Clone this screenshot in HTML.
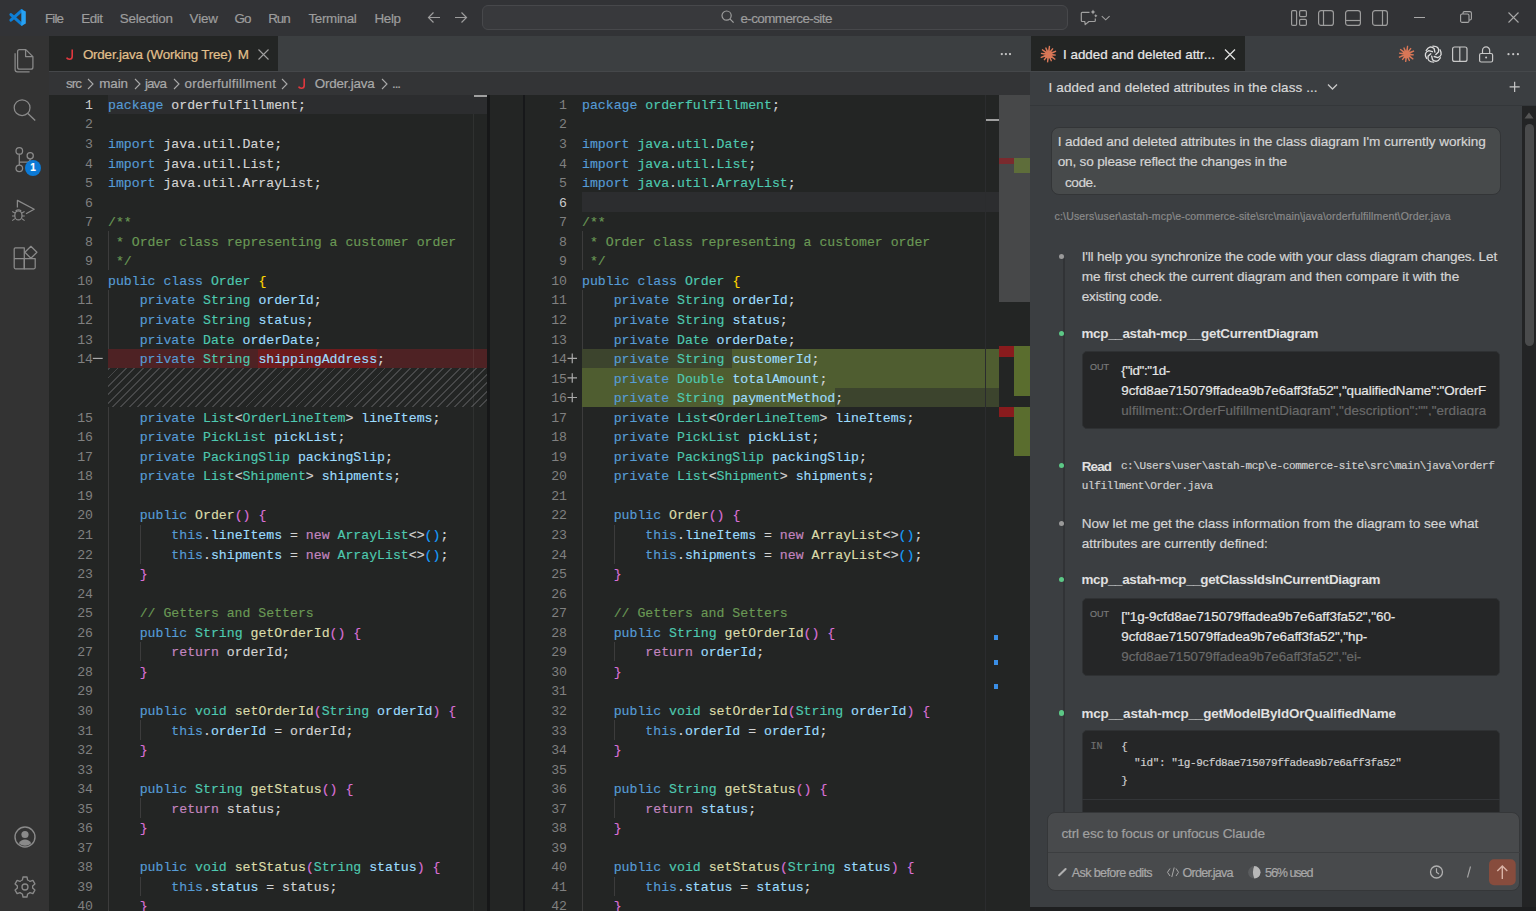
<!DOCTYPE html>
<html><head><meta charset="utf-8">
<style>
*{box-sizing:border-box}
html,body{margin:0;padding:0;width:1536px;height:911px;overflow:hidden;background:#323336;font-family:"Liberation Sans",sans-serif}
.a{position:absolute}
.tx{position:absolute;white-space:pre;-webkit-text-stroke:0.2px currentColor}
.cl{position:absolute;left:0;height:19.55px;line-height:19.55px;font-family:"Liberation Mono",monospace;font-size:13.200px;white-space:pre;color:#d4d4d4;-webkit-text-stroke:0.15px currentColor}
.ln{position:absolute;width:40px;height:19.55px;line-height:19.55px;font-family:"Liberation Mono",monospace;font-size:13.200px;text-align:right;white-space:pre}
svg{position:absolute;overflow:visible}
</style></head><body>
<!-- title bar -->
<div class="a" style="left:0;top:0;width:1536px;height:36px;background:#323336"></div>
<svg style="left:9.3px;top:9.1px" width="17" height="17" viewBox="0 0 17 17">
 <path d="M12.6 1.6L1.9 11.2M1.9 5.6L12.6 15.2" stroke="#0e7fd6" stroke-width="3" stroke-linecap="round"/>
 <path d="M12.3 0.2L16.8 2.4V14.6L12.3 16.9Z" fill="#27a2f4"/>
</svg>
<svg style="left:427px;top:11px" width="14" height="13" viewBox="0 0 14 13"><path d="M13 6.5H1.5M6.5 1.5L1.5 6.5L6.5 11.5" fill="none" stroke="#9d9d9d" stroke-width="1.2"/></svg>
<svg style="left:454px;top:11px" width="14" height="13" viewBox="0 0 14 13"><path d="M1 6.5H12.5M7.5 1.5L12.5 6.5L7.5 11.5" fill="none" stroke="#9d9d9d" stroke-width="1.2"/></svg>
<div class="a" style="left:482px;top:5px;width:586px;height:25px;background:#38393c;border:1px solid #47484b;border-radius:6px"></div>
<svg style="left:721px;top:10px" width="14" height="14" viewBox="0 0 14 14"><circle cx="5.6" cy="5.6" r="4.6" fill="none" stroke="#9d9d9d" stroke-width="1.2"/><path d="M8.9 8.9L12.6 12.6" stroke="#9d9d9d" stroke-width="1.3"/></svg>
<svg style="left:0;top:0" width="1536" height="36" viewBox="0 0 1536 36"><path d="M1089.5 12.3H1082.2Q1081.3 12.3 1081.3 13.2V20.6Q1081.3 21.5 1082.2 21.5H1084.8L1085.2 24.6L1088.9 21.5H1094.4Q1095.3 21.5 1095.3 20.6V18.4" fill="none" stroke="#a0a0a0" stroke-width="1.2" stroke-linejoin="round"/><path d="M1093 9.6L1093.8 11.2L1095.4 12L1093.8 12.8L1093 14.4L1092.2 12.8L1090.6 12L1092.2 11.2Z M1095.8 14.1L1096.4 15.2L1097.5 15.8L1096.4 16.4L1095.8 17.5L1095.2 16.4L1094.1 15.8L1095.2 15.2Z" fill="#a8a8a8"/><path d="M1101.8 16.2L1105.7 19.8L1109.6 16.2" fill="none" stroke="#a0a0a0" stroke-width="1.1"/></svg>
<!-- layout icons -->
<svg style="left:1291px;top:10px" width="16" height="16" viewBox="0 0 16 16"><rect x="0.6" y="0.6" width="5" height="14.8" rx="1.2" fill="none" stroke="#9d9d9d" stroke-width="1.2"/><rect x="8.6" y="0.6" width="6.8" height="6" rx="1.2" fill="none" stroke="#9d9d9d" stroke-width="1.2"/><rect x="8.6" y="9.4" width="6.8" height="6" rx="1.2" fill="none" stroke="#9d9d9d" stroke-width="1.2"/></svg>
<svg style="left:1318px;top:10px" width="16" height="16" viewBox="0 0 16 16"><rect x="0.6" y="0.6" width="14.8" height="14.8" rx="2.5" fill="none" stroke="#9d9d9d" stroke-width="1.2"/><path d="M5.5 0.6V15.4" stroke="#9d9d9d" stroke-width="1.2"/></svg>
<svg style="left:1345px;top:10px" width="16" height="16" viewBox="0 0 16 16"><rect x="0.6" y="0.6" width="14.8" height="14.8" rx="2.5" fill="none" stroke="#9d9d9d" stroke-width="1.2"/><path d="M0.6 10.5H15.4" stroke="#9d9d9d" stroke-width="1.2"/></svg>
<svg style="left:1372px;top:10px" width="16" height="16" viewBox="0 0 16 16"><rect x="0.6" y="0.6" width="14.8" height="14.8" rx="2.5" fill="none" stroke="#9d9d9d" stroke-width="1.2"/><path d="M10.5 0.6V15.4" stroke="#9d9d9d" stroke-width="1.2"/></svg>
<div class="a" style="left:1414px;top:16.5px;width:11px;height:1.2px;background:#a8a8a8"></div>
<svg style="left:1460px;top:11px" width="12" height="12" viewBox="0 0 12 12"><rect x="0.6" y="3" width="8.4" height="8.4" rx="1.5" fill="none" stroke="#a8a8a8" stroke-width="1.1"/><path d="M3 3V2.1A1.5 1.5 0 0 1 4.5 0.6H9.9A1.5 1.5 0 0 1 11.4 2.1V7.5A1.5 1.5 0 0 1 9.9 9H9" fill="none" stroke="#a8a8a8" stroke-width="1.1"/></svg>
<svg style="left:1508px;top:12px" width="11" height="11" viewBox="0 0 11 11"><path d="M0.5 0.5L10.5 10.5M10.5 0.5L0.5 10.5" stroke="#a8a8a8" stroke-width="1.1"/></svg>

<!-- activity bar -->
<div class="a" style="left:0;top:36px;width:49px;height:875px;background:#333333"></div>
<svg style="left:0;top:0" width="60" height="300" viewBox="0 0 60 300">
<g fill="none" stroke="#8b8b8b" stroke-width="1.25" stroke-linejoin="round">
 <path d="M19.5 49.6H25.8L32.9 56.6V67.2Q32.9 69.2 30.9 69.2H19.5Q17.6 69.2 17.6 67.2V51.6Q17.6 49.6 19.5 49.6Z"/>
 <path d="M25.6 49.8V56.5H32.8"/>
 <path d="M15.1 53.3V69.5Q15.1 71.8 17.4 71.8H29.6"/>
 <circle cx="22.1" cy="107.7" r="7.9"/>
 <path d="M27.9 113.6L35.2 120.6" stroke-width="1.4"/>
 <circle cx="19.3" cy="150.9" r="3.3"/>
 <circle cx="30.2" cy="155.8" r="3.1"/>
 <circle cx="19.3" cy="168.3" r="3.3"/>
 <path d="M19.3 154.2V165M19.3 162.2H26Q30.2 162.2 30.2 158.9"/>
 <path d="M17.4 207.5V200.4L34.2 209.3L26 213.8"/>
 <ellipse cx="18.4" cy="215.4" rx="3.6" ry="4.6"/>
 <path d="M12.2 211.6L15 213M12 216H14.8M12.2 220.6L15 218.6M24.6 211.6L21.8 213M24.8 216H22M24.6 220.6L21.8 218.6M15.6 211Q18.4 208.5 21.2 211" stroke-width="1.1"/>
 <path d="M15.4 247.9H24.3V268.8H15.4Q14.2 268.8 14.2 267.6V249.1Q14.2 247.9 15.4 247.9Z"/>
 <path d="M14.2 258.5H35.2V267.6Q35.2 268.8 34 268.8H24.3V258.5"/>
 <path d="M30.9 246.3L36.9 252.3L30.9 258.3L24.9 252.3Z"/>
</g>
</svg>
<div class="a" style="left:24.8px;top:159.8px;width:16.4px;height:16.4px;border-radius:8.2px;background:#0c7ad6"></div>
<div class="tx" style="left:24.8px;top:159.8px;width:16.4px;line-height:16.4px;font-size:10px;font-weight:700;color:#fff;text-align:center">1</div>
<svg style="left:14px;top:826px" width="22" height="22" viewBox="0 0 22 22"><circle cx="11" cy="11" r="10" fill="none" stroke="#8a8a8a" stroke-width="1.4"/><circle cx="11" cy="8.5" r="3.6" fill="#8a8a8a"/><path d="M4.8 17.2Q7 13.5 11 13.5Q15 13.5 17.2 17.2Q14.5 19.8 11 19.8Q7.5 19.8 4.8 17.2Z" fill="#8a8a8a"/></svg>
<svg style="left:14px;top:876px" width="22" height="22" viewBox="0 0 22 22"><path d="M9 1H13L13.6 4A7.5 7.5 0 0 1 16 5.4L18.9 4.4L20.9 7.9L18.6 9.9A7.5 7.5 0 0 1 18.6 12.1L20.9 14.1L18.9 17.6L16 16.6A7.5 7.5 0 0 1 13.6 18L13 21H9L8.4 18A7.5 7.5 0 0 1 6 16.6L3.1 17.6L1.1 14.1L3.4 12.1A7.5 7.5 0 0 1 3.4 9.9L1.1 7.9L3.1 4.4L6 5.4A7.5 7.5 0 0 1 8.4 4Z" fill="none" stroke="#8a8a8a" stroke-width="1.3" stroke-linejoin="round"/><circle cx="11" cy="11" r="3" fill="none" stroke="#8a8a8a" stroke-width="1.3"/></svg>

<!-- editor tab bar -->
<div class="a" style="left:49px;top:36px;width:981px;height:35px;background:#3c3f41"></div>
<div class="a" style="left:49px;top:36px;width:229.3px;height:35px;background:#232524"></div>
<div class="a" style="left:49px;top:71px;width:981px;height:1px;background:#45474a"></div>
<svg style="left:66px;top:49px" width="9" height="11" viewBox="0 0 9 11"><path d="M6.2 0.5V7.5Q6.2 10.2 3.4 10.2Q1.3 10.2 0.6 8.6" fill="none" stroke="#e0383e" stroke-width="1.6"/></svg>
<svg style="left:258px;top:49px" width="11" height="11" viewBox="0 0 11 11"><path d="M0.5 0.5L10.5 10.5M10.5 0.5L0.5 10.5" stroke="#a0a0a0" stroke-width="1.1"/></svg>
<svg style="left:0;top:0" width="1536" height="80"><circle cx="1001.8" cy="54.1" r="1.15" fill="#c8c8c8"/><circle cx="1005.9" cy="54.1" r="1.15" fill="#c8c8c8"/><circle cx="1010" cy="54.1" r="1.15" fill="#c8c8c8"/></svg>
<!-- breadcrumbs -->
<div class="a" style="left:49px;top:72px;width:981px;height:22.5px;background:#333436"></div>
<svg style="left:87px;top:78px" width="7" height="12" viewBox="0 0 7 12"><path d="M1 1L6 6L1 11" fill="none" stroke="#a9a9a9" stroke-width="1.1"/></svg>
<svg style="left:134px;top:78px" width="7" height="12" viewBox="0 0 7 12"><path d="M1 1L6 6L1 11" fill="none" stroke="#a9a9a9" stroke-width="1.1"/></svg>
<svg style="left:173px;top:78px" width="7" height="12" viewBox="0 0 7 12"><path d="M1 1L6 6L1 11" fill="none" stroke="#a9a9a9" stroke-width="1.1"/></svg>
<svg style="left:281px;top:78px" width="7" height="12" viewBox="0 0 7 12"><path d="M1 1L6 6L1 11" fill="none" stroke="#a9a9a9" stroke-width="1.1"/></svg>
<svg style="left:381px;top:78px" width="7" height="12" viewBox="0 0 7 12"><path d="M1 1L6 6L1 11" fill="none" stroke="#a9a9a9" stroke-width="1.1"/></svg>
<svg style="left:298px;top:78px" width="9" height="11" viewBox="0 0 9 11"><path d="M6.2 0.5V7.5Q6.2 10.2 3.4 10.2Q1.3 10.2 0.6 8.6" fill="none" stroke="#e0383e" stroke-width="1.6"/></svg>

<!-- left editor -->
<div class="a" style="left:49px;top:94.5px;width:439px;height:817px;background:#232524"></div>
<div style="position:absolute;left:108.0px;top:231.35px;width:1px;height:39.10px;background:#3c3c3c"></div>
<div style="position:absolute;left:108.0px;top:290.00px;width:1px;height:645.15px;background:#3c3c3c"></div>
<div style="position:absolute;left:139.7px;top:524.60px;width:1px;height:39.10px;background:#3c3c3c"></div>
<div style="position:absolute;left:139.7px;top:641.90px;width:1px;height:19.55px;background:#3c3c3c"></div>
<div style="position:absolute;left:139.7px;top:720.10px;width:1px;height:19.55px;background:#3c3c3c"></div>
<div style="position:absolute;left:139.7px;top:798.30px;width:1px;height:19.55px;background:#3c3c3c"></div>
<div style="position:absolute;left:139.7px;top:876.50px;width:1px;height:19.55px;background:#3c3c3c"></div>
<div class="a" style="left:108px;top:348.8px;width:379.4px;height:19.56px;background:#4e2224"></div>
<div class="a" style="left:258px;top:348.8px;width:119px;height:19.56px;background:#6e1b1d"></div>
<div class="a" style="left:108px;top:368.4px;width:379.4px;height:39.1px;background:repeating-linear-gradient(-45deg,#232524 0px,#232524 4.6px,#474849 4.6px,#474849 5.9px)"></div>
<div class="a" style="left:473px;top:94.5px;width:1px;height:817px;background:rgba(255,255,255,0.06)"></div>
<div class="a" style="left:108px;top:94.5px;width:379.4px;height:19.56px;background:#2c2d2f"></div>
<div class="a" style="left:474px;top:94.5px;width:13.4px;height:2px;background:#a0a0a0"></div>
<div class="ln" style="top:95.90px;left:53px;color:#cccccc">1</div>
<div class="ln" style="top:115.45px;left:53px;color:#808080">2</div>
<div class="ln" style="top:135.00px;left:53px;color:#808080">3</div>
<div class="ln" style="top:154.55px;left:53px;color:#808080">4</div>
<div class="ln" style="top:174.10px;left:53px;color:#808080">5</div>
<div class="ln" style="top:193.65px;left:53px;color:#808080">6</div>
<div class="ln" style="top:213.20px;left:53px;color:#808080">7</div>
<div class="ln" style="top:232.75px;left:53px;color:#808080">8</div>
<div class="ln" style="top:252.30px;left:53px;color:#808080">9</div>
<div class="ln" style="top:271.85px;left:53px;color:#808080">10</div>
<div class="ln" style="top:291.40px;left:53px;color:#808080">11</div>
<div class="ln" style="top:310.95px;left:53px;color:#808080">12</div>
<div class="ln" style="top:330.50px;left:53px;color:#808080">13</div>
<div class="ln" style="top:350.05px;left:53px;color:#808080">14</div>
<svg style="left:0;top:0" width="1" height="1"><path d="M92.8 358.42H102.7" stroke="#aaaaaa" stroke-width="1.2"/></svg>
<div class="ln" style="top:408.70px;left:53px;color:#808080">15</div>
<div class="ln" style="top:428.25px;left:53px;color:#808080">16</div>
<div class="ln" style="top:447.80px;left:53px;color:#808080">17</div>
<div class="ln" style="top:467.35px;left:53px;color:#808080">18</div>
<div class="ln" style="top:486.90px;left:53px;color:#808080">19</div>
<div class="ln" style="top:506.45px;left:53px;color:#808080">20</div>
<div class="ln" style="top:526.00px;left:53px;color:#808080">21</div>
<div class="ln" style="top:545.55px;left:53px;color:#808080">22</div>
<div class="ln" style="top:565.10px;left:53px;color:#808080">23</div>
<div class="ln" style="top:584.65px;left:53px;color:#808080">24</div>
<div class="ln" style="top:604.20px;left:53px;color:#808080">25</div>
<div class="ln" style="top:623.75px;left:53px;color:#808080">26</div>
<div class="ln" style="top:643.30px;left:53px;color:#808080">27</div>
<div class="ln" style="top:662.85px;left:53px;color:#808080">28</div>
<div class="ln" style="top:682.40px;left:53px;color:#808080">29</div>
<div class="ln" style="top:701.95px;left:53px;color:#808080">30</div>
<div class="ln" style="top:721.50px;left:53px;color:#808080">31</div>
<div class="ln" style="top:741.05px;left:53px;color:#808080">32</div>
<div class="ln" style="top:760.60px;left:53px;color:#808080">33</div>
<div class="ln" style="top:780.15px;left:53px;color:#808080">34</div>
<div class="ln" style="top:799.70px;left:53px;color:#808080">35</div>
<div class="ln" style="top:819.25px;left:53px;color:#808080">36</div>
<div class="ln" style="top:838.80px;left:53px;color:#808080">37</div>
<div class="ln" style="top:858.35px;left:53px;color:#808080">38</div>
<div class="ln" style="top:877.90px;left:53px;color:#808080">39</div>
<div class="ln" style="top:897.45px;left:53px;color:#808080">40</div>
<div class="ln" style="top:917.00px;left:53px;color:#808080">41</div>
<div class="a" style="left:108px;top:0;width:366px;height:911px;overflow:hidden">
<div class="a" style="left:0;top:0;width:800px;height:911px">
<div class="cl" style="top:95.90px"><span style="color:#569cd6">package </span><span style="color:#d4d4d4">orderfulfillment;</span></div>
<div class="cl" style="top:115.45px"></div>
<div class="cl" style="top:135.00px"><span style="color:#569cd6">import </span><span style="color:#d4d4d4">java.util.Date;</span></div>
<div class="cl" style="top:154.55px"><span style="color:#569cd6">import </span><span style="color:#d4d4d4">java.util.List;</span></div>
<div class="cl" style="top:174.10px"><span style="color:#569cd6">import </span><span style="color:#d4d4d4">java.util.ArrayList;</span></div>
<div class="cl" style="top:193.65px"></div>
<div class="cl" style="top:213.20px"><span style="color:#6a9955">/**</span></div>
<div class="cl" style="top:232.75px"><span style="color:#6a9955"> * Order class representing a customer order</span></div>
<div class="cl" style="top:252.30px"><span style="color:#6a9955"> */</span></div>
<div class="cl" style="top:271.85px"><span style="color:#569cd6">public class </span><span style="color:#4ec9b0">Order </span><span style="color:#ffd700">{</span></div>
<div class="cl" style="top:291.40px"><span style="color:#d4d4d4">    </span><span style="color:#569cd6">private </span><span style="color:#4ec9b0">String </span><span style="color:#9cdcfe">orderId</span><span style="color:#d4d4d4">;</span></div>
<div class="cl" style="top:310.95px"><span style="color:#d4d4d4">    </span><span style="color:#569cd6">private </span><span style="color:#4ec9b0">String </span><span style="color:#9cdcfe">status</span><span style="color:#d4d4d4">;</span></div>
<div class="cl" style="top:330.50px"><span style="color:#d4d4d4">    </span><span style="color:#569cd6">private </span><span style="color:#4ec9b0">Date </span><span style="color:#9cdcfe">orderDate</span><span style="color:#d4d4d4">;</span></div>
<div class="cl" style="top:350.05px"><span style="color:#d4d4d4">    </span><span style="color:#569cd6">private </span><span style="color:#4ec9b0">String </span><span style="color:#9cdcfe">shippingAddress</span><span style="color:#d4d4d4">;</span></div>
<div class="cl" style="top:408.70px"><span style="color:#d4d4d4">    </span><span style="color:#569cd6">private </span><span style="color:#4ec9b0">List</span><span style="color:#d4d4d4">&lt;</span><span style="color:#4ec9b0">OrderLineItem</span><span style="color:#d4d4d4">&gt; </span><span style="color:#9cdcfe">lineItems</span><span style="color:#d4d4d4">;</span></div>
<div class="cl" style="top:428.25px"><span style="color:#d4d4d4">    </span><span style="color:#569cd6">private </span><span style="color:#4ec9b0">PickList </span><span style="color:#9cdcfe">pickList</span><span style="color:#d4d4d4">;</span></div>
<div class="cl" style="top:447.80px"><span style="color:#d4d4d4">    </span><span style="color:#569cd6">private </span><span style="color:#4ec9b0">PackingSlip </span><span style="color:#9cdcfe">packingSlip</span><span style="color:#d4d4d4">;</span></div>
<div class="cl" style="top:467.35px"><span style="color:#d4d4d4">    </span><span style="color:#569cd6">private </span><span style="color:#4ec9b0">List</span><span style="color:#d4d4d4">&lt;</span><span style="color:#4ec9b0">Shipment</span><span style="color:#d4d4d4">&gt; </span><span style="color:#9cdcfe">shipments</span><span style="color:#d4d4d4">;</span></div>
<div class="cl" style="top:486.90px"></div>
<div class="cl" style="top:506.45px"><span style="color:#d4d4d4">    </span><span style="color:#569cd6">public </span><span style="color:#dcdcaa">Order</span><span style="color:#da70d6">() {</span></div>
<div class="cl" style="top:526.00px"><span style="color:#d4d4d4">        </span><span style="color:#569cd6">this</span><span style="color:#d4d4d4">.</span><span style="color:#9cdcfe">lineItems </span><span style="color:#d4d4d4">= </span><span style="color:#c586c0">new </span><span style="color:#4ec9b0">ArrayList</span><span style="color:#d4d4d4">&lt;&gt;</span><span style="color:#179fff">()</span><span style="color:#d4d4d4">;</span></div>
<div class="cl" style="top:545.55px"><span style="color:#d4d4d4">        </span><span style="color:#569cd6">this</span><span style="color:#d4d4d4">.</span><span style="color:#9cdcfe">shipments </span><span style="color:#d4d4d4">= </span><span style="color:#c586c0">new </span><span style="color:#4ec9b0">ArrayList</span><span style="color:#d4d4d4">&lt;&gt;</span><span style="color:#179fff">()</span><span style="color:#d4d4d4">;</span></div>
<div class="cl" style="top:565.10px"><span style="color:#d4d4d4">    </span><span style="color:#da70d6">}</span></div>
<div class="cl" style="top:584.65px"></div>
<div class="cl" style="top:604.20px"><span style="color:#6a9955">    // Getters and Setters</span></div>
<div class="cl" style="top:623.75px"><span style="color:#d4d4d4">    </span><span style="color:#569cd6">public </span><span style="color:#4ec9b0">String </span><span style="color:#dcdcaa">getOrderId</span><span style="color:#da70d6">() {</span></div>
<div class="cl" style="top:643.30px"><span style="color:#d4d4d4">        </span><span style="color:#c586c0">return </span><span style="color:#d4d4d4">orderId;</span></div>
<div class="cl" style="top:662.85px"><span style="color:#d4d4d4">    </span><span style="color:#da70d6">}</span></div>
<div class="cl" style="top:682.40px"></div>
<div class="cl" style="top:701.95px"><span style="color:#d4d4d4">    </span><span style="color:#569cd6">public </span><span style="color:#4ec9b0">void </span><span style="color:#dcdcaa">setOrderId</span><span style="color:#da70d6">(</span><span style="color:#4ec9b0">String </span><span style="color:#9cdcfe">orderId</span><span style="color:#da70d6">) {</span></div>
<div class="cl" style="top:721.50px"><span style="color:#d4d4d4">        </span><span style="color:#569cd6">this</span><span style="color:#d4d4d4">.</span><span style="color:#9cdcfe">orderId </span><span style="color:#d4d4d4">= orderId;</span></div>
<div class="cl" style="top:741.05px"><span style="color:#d4d4d4">    </span><span style="color:#da70d6">}</span></div>
<div class="cl" style="top:760.60px"></div>
<div class="cl" style="top:780.15px"><span style="color:#d4d4d4">    </span><span style="color:#569cd6">public </span><span style="color:#4ec9b0">String </span><span style="color:#dcdcaa">getStatus</span><span style="color:#da70d6">() {</span></div>
<div class="cl" style="top:799.70px"><span style="color:#d4d4d4">        </span><span style="color:#c586c0">return </span><span style="color:#d4d4d4">status;</span></div>
<div class="cl" style="top:819.25px"><span style="color:#d4d4d4">    </span><span style="color:#da70d6">}</span></div>
<div class="cl" style="top:838.80px"></div>
<div class="cl" style="top:858.35px"><span style="color:#d4d4d4">    </span><span style="color:#569cd6">public </span><span style="color:#4ec9b0">void </span><span style="color:#dcdcaa">setStatus</span><span style="color:#da70d6">(</span><span style="color:#4ec9b0">String </span><span style="color:#9cdcfe">status</span><span style="color:#da70d6">) {</span></div>
<div class="cl" style="top:877.90px"><span style="color:#d4d4d4">        </span><span style="color:#569cd6">this</span><span style="color:#d4d4d4">.</span><span style="color:#9cdcfe">status </span><span style="color:#d4d4d4">= status;</span></div>
<div class="cl" style="top:897.45px"><span style="color:#d4d4d4">    </span><span style="color:#da70d6">}</span></div>
<div class="cl" style="top:917.00px"><span style="color:#ffd700">}</span></div>
</div></div>
<div class="a" style="left:487.4px;top:94.5px;width:3px;height:817px;background:#161718"></div>

<!-- right editor -->
<div class="a" style="left:490px;top:94.5px;width:540px;height:817px;background:#232524"></div>
<div class="a" style="left:523px;top:94.5px;width:1.5px;height:817px;background:#17181a"></div>
<div style="position:absolute;left:582.0px;top:231.35px;width:1px;height:39.10px;background:#3c3c3c"></div>
<div style="position:absolute;left:582.0px;top:290.00px;width:1px;height:645.15px;background:#3c3c3c"></div>
<div style="position:absolute;left:613.7px;top:524.60px;width:1px;height:39.10px;background:#3c3c3c"></div>
<div style="position:absolute;left:613.7px;top:641.90px;width:1px;height:19.55px;background:#3c3c3c"></div>
<div style="position:absolute;left:613.7px;top:720.10px;width:1px;height:19.55px;background:#3c3c3c"></div>
<div style="position:absolute;left:613.7px;top:798.30px;width:1px;height:19.55px;background:#3c3c3c"></div>
<div style="position:absolute;left:613.7px;top:876.50px;width:1px;height:19.55px;background:#3c3c3c"></div>
<div class="a" style="left:582px;top:192.3px;width:417.3px;height:19.56px;background:#2c2d2f"></div>
<div class="a" style="left:582px;top:348.8px;width:417.3px;height:58.7px;background:#3c442d"></div>
<div class="a" style="left:732px;top:348.8px;width:267.3px;height:19.56px;background:#4f5d30"></div>
<div class="a" style="left:582px;top:368.4px;width:417.3px;height:19.56px;background:#4f5d30"></div>
<div class="a" style="left:582px;top:387.9px;width:253.4px;height:19.56px;background:#4f5d30"></div>
<div class="a" style="left:984.6px;top:94.5px;width:1px;height:817px;background:#2b2c2e"></div>
<div class="a" style="left:985.6px;top:118.5px;width:13.7px;height:2px;background:#a0a0a0"></div>
<!-- diff overview -->
<div class="a" style="left:999.3px;top:94.5px;width:30.7px;height:817px;background:#232524"></div>
<div class="a" style="left:999.3px;top:94.5px;width:30.7px;height:207.5px;background:#474849"></div>
<div class="a" style="left:999.3px;top:158px;width:15px;height:6px;background:#7a2a2e"></div>
<div class="a" style="left:1014.3px;top:158px;width:15.7px;height:15.4px;background:#5e6d3a"></div>
<div class="a" style="left:999.3px;top:346.3px;width:14.9px;height:11px;background:#891b1d"></div>
<div class="a" style="left:1014.2px;top:346.3px;width:15.8px;height:50.1px;background:#5a6d2e"></div>
<div class="a" style="left:999.3px;top:406.7px;width:14.9px;height:9.9px;background:#891b1d"></div>
<div class="a" style="left:1014.2px;top:406.7px;width:15.8px;height:49.3px;background:#5a6d2e"></div>
<!-- right overview ruler markers -->
<div class="a" style="left:994px;top:635px;width:4px;height:5px;background:#3a8ee6"></div>
<div class="a" style="left:994px;top:660px;width:4px;height:5px;background:#3a8ee6"></div>
<div class="a" style="left:994px;top:684px;width:4px;height:5px;background:#3a8ee6"></div>
<div class="ln" style="top:95.90px;left:527px;color:#808080">1</div>
<div class="ln" style="top:115.45px;left:527px;color:#808080">2</div>
<div class="ln" style="top:135.00px;left:527px;color:#808080">3</div>
<div class="ln" style="top:154.55px;left:527px;color:#808080">4</div>
<div class="ln" style="top:174.10px;left:527px;color:#808080">5</div>
<div class="ln" style="top:193.65px;left:527px;color:#cccccc">6</div>
<div class="ln" style="top:213.20px;left:527px;color:#808080">7</div>
<div class="ln" style="top:232.75px;left:527px;color:#808080">8</div>
<div class="ln" style="top:252.30px;left:527px;color:#808080">9</div>
<div class="ln" style="top:271.85px;left:527px;color:#808080">10</div>
<div class="ln" style="top:291.40px;left:527px;color:#808080">11</div>
<div class="ln" style="top:310.95px;left:527px;color:#808080">12</div>
<div class="ln" style="top:330.50px;left:527px;color:#808080">13</div>
<div class="ln" style="top:350.05px;left:527px;color:#808080">14</div>
<svg style="left:0;top:0" width="1" height="1"><path d="M567.5 358.42H577.0M572.25 353.62V363.22" stroke="#aaaaaa" stroke-width="1.2"/></svg>
<div class="ln" style="top:369.60px;left:527px;color:#808080">15</div>
<svg style="left:0;top:0" width="1" height="1"><path d="M567.5 377.97H577.0M572.25 373.17V382.77" stroke="#aaaaaa" stroke-width="1.2"/></svg>
<div class="ln" style="top:389.15px;left:527px;color:#808080">16</div>
<svg style="left:0;top:0" width="1" height="1"><path d="M567.5 397.52H577.0M572.25 392.72V402.32" stroke="#aaaaaa" stroke-width="1.2"/></svg>
<div class="ln" style="top:408.70px;left:527px;color:#808080">17</div>
<div class="ln" style="top:428.25px;left:527px;color:#808080">18</div>
<div class="ln" style="top:447.80px;left:527px;color:#808080">19</div>
<div class="ln" style="top:467.35px;left:527px;color:#808080">20</div>
<div class="ln" style="top:486.90px;left:527px;color:#808080">21</div>
<div class="ln" style="top:506.45px;left:527px;color:#808080">22</div>
<div class="ln" style="top:526.00px;left:527px;color:#808080">23</div>
<div class="ln" style="top:545.55px;left:527px;color:#808080">24</div>
<div class="ln" style="top:565.10px;left:527px;color:#808080">25</div>
<div class="ln" style="top:584.65px;left:527px;color:#808080">26</div>
<div class="ln" style="top:604.20px;left:527px;color:#808080">27</div>
<div class="ln" style="top:623.75px;left:527px;color:#808080">28</div>
<div class="ln" style="top:643.30px;left:527px;color:#808080">29</div>
<div class="ln" style="top:662.85px;left:527px;color:#808080">30</div>
<div class="ln" style="top:682.40px;left:527px;color:#808080">31</div>
<div class="ln" style="top:701.95px;left:527px;color:#808080">32</div>
<div class="ln" style="top:721.50px;left:527px;color:#808080">33</div>
<div class="ln" style="top:741.05px;left:527px;color:#808080">34</div>
<div class="ln" style="top:760.60px;left:527px;color:#808080">35</div>
<div class="ln" style="top:780.15px;left:527px;color:#808080">36</div>
<div class="ln" style="top:799.70px;left:527px;color:#808080">37</div>
<div class="ln" style="top:819.25px;left:527px;color:#808080">38</div>
<div class="ln" style="top:838.80px;left:527px;color:#808080">39</div>
<div class="ln" style="top:858.35px;left:527px;color:#808080">40</div>
<div class="ln" style="top:877.90px;left:527px;color:#808080">41</div>
<div class="ln" style="top:897.45px;left:527px;color:#808080">42</div>
<div class="ln" style="top:917.00px;left:527px;color:#808080">43</div>
<div class="a" style="left:582px;top:0;width:403px;height:911px;overflow:hidden">
<div class="a" style="left:0;top:0;width:800px;height:911px">
<div class="cl" style="top:95.90px"><span style="color:#569cd6">package </span><span style="color:#4ec9b0">orderfulfillment</span><span style="color:#d4d4d4">;</span></div>
<div class="cl" style="top:115.45px"></div>
<div class="cl" style="top:135.00px"><span style="color:#569cd6">import </span><span style="color:#4ec9b0">java</span><span style="color:#d4d4d4">.</span><span style="color:#4ec9b0">util</span><span style="color:#d4d4d4">.</span><span style="color:#4ec9b0">Date</span><span style="color:#d4d4d4">;</span></div>
<div class="cl" style="top:154.55px"><span style="color:#569cd6">import </span><span style="color:#4ec9b0">java</span><span style="color:#d4d4d4">.</span><span style="color:#4ec9b0">util</span><span style="color:#d4d4d4">.</span><span style="color:#4ec9b0">List</span><span style="color:#d4d4d4">;</span></div>
<div class="cl" style="top:174.10px"><span style="color:#569cd6">import </span><span style="color:#4ec9b0">java</span><span style="color:#d4d4d4">.</span><span style="color:#4ec9b0">util</span><span style="color:#d4d4d4">.</span><span style="color:#4ec9b0">ArrayList</span><span style="color:#d4d4d4">;</span></div>
<div class="cl" style="top:193.65px"></div>
<div class="cl" style="top:213.20px"><span style="color:#6a9955">/**</span></div>
<div class="cl" style="top:232.75px"><span style="color:#6a9955"> * Order class representing a customer order</span></div>
<div class="cl" style="top:252.30px"><span style="color:#6a9955"> */</span></div>
<div class="cl" style="top:271.85px"><span style="color:#569cd6">public class </span><span style="color:#4ec9b0">Order </span><span style="color:#ffd700">{</span></div>
<div class="cl" style="top:291.40px"><span style="color:#d4d4d4">    </span><span style="color:#569cd6">private </span><span style="color:#4ec9b0">String </span><span style="color:#9cdcfe">orderId</span><span style="color:#d4d4d4">;</span></div>
<div class="cl" style="top:310.95px"><span style="color:#d4d4d4">    </span><span style="color:#569cd6">private </span><span style="color:#4ec9b0">String </span><span style="color:#9cdcfe">status</span><span style="color:#d4d4d4">;</span></div>
<div class="cl" style="top:330.50px"><span style="color:#d4d4d4">    </span><span style="color:#569cd6">private </span><span style="color:#4ec9b0">Date </span><span style="color:#9cdcfe">orderDate</span><span style="color:#d4d4d4">;</span></div>
<div class="cl" style="top:350.05px"><span style="color:#d4d4d4">    </span><span style="color:#569cd6">private </span><span style="color:#4ec9b0">String </span><span style="color:#9cdcfe">customerId</span><span style="color:#d4d4d4">;</span></div>
<div class="cl" style="top:369.60px"><span style="color:#d4d4d4">    </span><span style="color:#569cd6">private </span><span style="color:#4ec9b0">Double </span><span style="color:#9cdcfe">totalAmount</span><span style="color:#d4d4d4">;</span></div>
<div class="cl" style="top:389.15px"><span style="color:#d4d4d4">    </span><span style="color:#569cd6">private </span><span style="color:#4ec9b0">String </span><span style="color:#9cdcfe">paymentMethod</span><span style="color:#d4d4d4">;</span></div>
<div class="cl" style="top:408.70px"><span style="color:#d4d4d4">    </span><span style="color:#569cd6">private </span><span style="color:#4ec9b0">List</span><span style="color:#d4d4d4">&lt;</span><span style="color:#4ec9b0">OrderLineItem</span><span style="color:#d4d4d4">&gt; </span><span style="color:#9cdcfe">lineItems</span><span style="color:#d4d4d4">;</span></div>
<div class="cl" style="top:428.25px"><span style="color:#d4d4d4">    </span><span style="color:#569cd6">private </span><span style="color:#4ec9b0">PickList </span><span style="color:#9cdcfe">pickList</span><span style="color:#d4d4d4">;</span></div>
<div class="cl" style="top:447.80px"><span style="color:#d4d4d4">    </span><span style="color:#569cd6">private </span><span style="color:#4ec9b0">PackingSlip </span><span style="color:#9cdcfe">packingSlip</span><span style="color:#d4d4d4">;</span></div>
<div class="cl" style="top:467.35px"><span style="color:#d4d4d4">    </span><span style="color:#569cd6">private </span><span style="color:#4ec9b0">List</span><span style="color:#d4d4d4">&lt;</span><span style="color:#4ec9b0">Shipment</span><span style="color:#d4d4d4">&gt; </span><span style="color:#9cdcfe">shipments</span><span style="color:#d4d4d4">;</span></div>
<div class="cl" style="top:486.90px"></div>
<div class="cl" style="top:506.45px"><span style="color:#d4d4d4">    </span><span style="color:#569cd6">public </span><span style="color:#dcdcaa">Order</span><span style="color:#da70d6">() {</span></div>
<div class="cl" style="top:526.00px"><span style="color:#d4d4d4">        </span><span style="color:#569cd6">this</span><span style="color:#d4d4d4">.</span><span style="color:#9cdcfe">lineItems </span><span style="color:#d4d4d4">= </span><span style="color:#c586c0">new </span><span style="color:#dcdcaa">ArrayList</span><span style="color:#d4d4d4">&lt;&gt;</span><span style="color:#179fff">()</span><span style="color:#d4d4d4">;</span></div>
<div class="cl" style="top:545.55px"><span style="color:#d4d4d4">        </span><span style="color:#569cd6">this</span><span style="color:#d4d4d4">.</span><span style="color:#9cdcfe">shipments </span><span style="color:#d4d4d4">= </span><span style="color:#c586c0">new </span><span style="color:#dcdcaa">ArrayList</span><span style="color:#d4d4d4">&lt;&gt;</span><span style="color:#179fff">()</span><span style="color:#d4d4d4">;</span></div>
<div class="cl" style="top:565.10px"><span style="color:#d4d4d4">    </span><span style="color:#da70d6">}</span></div>
<div class="cl" style="top:584.65px"></div>
<div class="cl" style="top:604.20px"><span style="color:#6a9955">    // Getters and Setters</span></div>
<div class="cl" style="top:623.75px"><span style="color:#d4d4d4">    </span><span style="color:#569cd6">public </span><span style="color:#4ec9b0">String </span><span style="color:#dcdcaa">getOrderId</span><span style="color:#da70d6">() {</span></div>
<div class="cl" style="top:643.30px"><span style="color:#d4d4d4">        </span><span style="color:#c586c0">return </span><span style="color:#9cdcfe">orderId</span><span style="color:#d4d4d4">;</span></div>
<div class="cl" style="top:662.85px"><span style="color:#d4d4d4">    </span><span style="color:#da70d6">}</span></div>
<div class="cl" style="top:682.40px"></div>
<div class="cl" style="top:701.95px"><span style="color:#d4d4d4">    </span><span style="color:#569cd6">public </span><span style="color:#4ec9b0">void </span><span style="color:#dcdcaa">setOrderId</span><span style="color:#da70d6">(</span><span style="color:#4ec9b0">String </span><span style="color:#9cdcfe">orderId</span><span style="color:#da70d6">) {</span></div>
<div class="cl" style="top:721.50px"><span style="color:#d4d4d4">        </span><span style="color:#569cd6">this</span><span style="color:#d4d4d4">.</span><span style="color:#9cdcfe">orderId </span><span style="color:#d4d4d4">= </span><span style="color:#9cdcfe">orderId</span><span style="color:#d4d4d4">;</span></div>
<div class="cl" style="top:741.05px"><span style="color:#d4d4d4">    </span><span style="color:#da70d6">}</span></div>
<div class="cl" style="top:760.60px"></div>
<div class="cl" style="top:780.15px"><span style="color:#d4d4d4">    </span><span style="color:#569cd6">public </span><span style="color:#4ec9b0">String </span><span style="color:#dcdcaa">getStatus</span><span style="color:#da70d6">() {</span></div>
<div class="cl" style="top:799.70px"><span style="color:#d4d4d4">        </span><span style="color:#c586c0">return </span><span style="color:#9cdcfe">status</span><span style="color:#d4d4d4">;</span></div>
<div class="cl" style="top:819.25px"><span style="color:#d4d4d4">    </span><span style="color:#da70d6">}</span></div>
<div class="cl" style="top:838.80px"></div>
<div class="cl" style="top:858.35px"><span style="color:#d4d4d4">    </span><span style="color:#569cd6">public </span><span style="color:#4ec9b0">void </span><span style="color:#dcdcaa">setStatus</span><span style="color:#da70d6">(</span><span style="color:#4ec9b0">String </span><span style="color:#9cdcfe">status</span><span style="color:#da70d6">) {</span></div>
<div class="cl" style="top:877.90px"><span style="color:#d4d4d4">        </span><span style="color:#569cd6">this</span><span style="color:#d4d4d4">.</span><span style="color:#9cdcfe">status </span><span style="color:#d4d4d4">= </span><span style="color:#9cdcfe">status</span><span style="color:#d4d4d4">;</span></div>
<div class="cl" style="top:897.45px"><span style="color:#d4d4d4">    </span><span style="color:#da70d6">}</span></div>
<div class="cl" style="top:917.00px"><span style="color:#ffd700">}</span></div>
</div></div>

<!-- chat panel -->
<div class="a" style="left:1030px;top:36px;width:506px;height:875px;background:#3b3e41"></div>
<div class="a" style="left:1031px;top:36px;width:213.6px;height:35px;background:#232524"></div>
<div class="a" style="left:1030px;top:71px;width:506px;height:1px;background:#45484b"></div>
<div class="a" style="left:1030px;top:105px;width:506px;height:1px;background:#34373a"></div>

<svg style="left:0;top:0" width="1536" height="911">
<path d="M1049.61 53.58L1050.15 45.94L1048.88 45.78L1047.59 53.33ZM1049.83 54.23L1053.50 48.70L1052.48 47.93L1048.19 53.01ZM1049.68 54.90L1056.33 51.65L1055.83 50.48L1048.88 53.03ZM1049.22 55.41L1055.68 55.81L1055.83 54.54L1049.47 53.39ZM1048.57 55.63L1054.92 59.91L1055.68 58.89L1049.79 53.99ZM1047.90 55.48L1050.92 61.59L1052.09 61.08L1049.77 54.68ZM1047.39 55.02L1046.90 62.24L1048.17 62.39L1049.41 55.27ZM1047.17 54.37L1043.55 59.83L1044.57 60.60L1048.81 55.59ZM1047.32 53.70L1040.43 57.05L1040.93 58.22L1048.12 55.57ZM1047.78 53.19L1040.98 52.75L1040.83 54.02L1047.53 55.21ZM1048.43 52.97L1042.36 48.89L1041.59 49.91L1047.21 54.61ZM1049.10 53.12L1046.22 47.33L1045.04 47.83L1047.23 53.92Z" fill="#d97757"/><circle cx="1048.5" cy="54.3" r="1.87" fill="#d97757"/>
<path d="M1407.70 53.39L1408.23 45.84L1406.98 45.68L1405.70 53.15ZM1407.91 54.03L1411.54 48.56L1410.53 47.81L1406.30 52.82ZM1407.77 54.70L1414.34 51.48L1413.85 50.32L1406.98 52.84ZM1407.31 55.20L1413.70 55.59L1413.85 54.34L1407.55 53.20ZM1406.67 55.41L1412.94 59.64L1413.70 58.64L1407.88 53.80ZM1406.00 55.27L1408.99 61.30L1410.15 60.81L1407.86 54.48ZM1405.50 54.81L1405.02 61.95L1406.27 62.10L1407.50 55.05ZM1405.29 54.17L1401.71 59.57L1402.72 60.32L1406.90 55.38ZM1405.43 53.50L1398.63 56.82L1399.12 57.98L1406.22 55.36ZM1405.89 53.00L1399.17 52.57L1399.02 53.82L1405.65 55.00ZM1406.53 52.79L1400.53 48.76L1399.77 49.76L1405.32 54.40ZM1407.20 52.93L1404.34 47.21L1403.18 47.70L1405.34 53.72Z" fill="#d97757"/><circle cx="1406.6" cy="54.1" r="1.85" fill="#d97757"/>
<path d="M1225 49.5L1235 59.5M1235 49.5L1225 59.5" stroke="#e0e0e0" stroke-width="1.3"/>
<g transform="translate(1433.3 54.1) rotate(0)"><path d="M-0.42 -7.98 Q6.30 -7.98 5.21 -2.10 L2.52 0.42" fill="none" stroke="#dcdcdc" stroke-width="1.35" stroke-linecap="round"/></g><g transform="translate(1433.3 54.1) rotate(60)"><path d="M-0.42 -7.98 Q6.30 -7.98 5.21 -2.10 L2.52 0.42" fill="none" stroke="#dcdcdc" stroke-width="1.35" stroke-linecap="round"/></g><g transform="translate(1433.3 54.1) rotate(120)"><path d="M-0.42 -7.98 Q6.30 -7.98 5.21 -2.10 L2.52 0.42" fill="none" stroke="#dcdcdc" stroke-width="1.35" stroke-linecap="round"/></g><g transform="translate(1433.3 54.1) rotate(180)"><path d="M-0.42 -7.98 Q6.30 -7.98 5.21 -2.10 L2.52 0.42" fill="none" stroke="#dcdcdc" stroke-width="1.35" stroke-linecap="round"/></g><g transform="translate(1433.3 54.1) rotate(240)"><path d="M-0.42 -7.98 Q6.30 -7.98 5.21 -2.10 L2.52 0.42" fill="none" stroke="#dcdcdc" stroke-width="1.35" stroke-linecap="round"/></g><g transform="translate(1433.3 54.1) rotate(300)"><path d="M-0.42 -7.98 Q6.30 -7.98 5.21 -2.10 L2.52 0.42" fill="none" stroke="#dcdcdc" stroke-width="1.35" stroke-linecap="round"/></g>
<rect x="1452.6" y="47" width="14.4" height="14.4" rx="2" fill="none" stroke="#c8c8c8" stroke-width="1.2"/>
<path d="M1459.8 47V61.4" stroke="#c8c8c8" stroke-width="1.2"/>
<rect x="1479.6" y="53.5" width="13" height="8.5" rx="1.5" fill="none" stroke="#c8c8c8" stroke-width="1.2"/>
<path d="M1482.5 53.5V50.5a3.6 3.6 0 0 1 7.2 0V53.5" fill="none" stroke="#c8c8c8" stroke-width="1.2"/>
<circle cx="1486.1" cy="57.5" r="1" fill="#c8c8c8"/>
<circle cx="1508.5" cy="54.2" r="1.1" fill="#c8c8c8"/><circle cx="1513.2" cy="54.2" r="1.1" fill="#c8c8c8"/><circle cx="1517.9" cy="54.2" r="1.1" fill="#c8c8c8"/>
<path d="M1328 84.5L1332.5 89L1337 84.5" fill="none" stroke="#c8c8c8" stroke-width="1.3"/>
<path d="M1509.6 86.8H1519.7M1514.65 81.7V91.9" stroke="#c8c8c8" stroke-width="1.2"/>
</svg>
<div class="a" style="left:1522px;top:106px;width:14px;height:801px;background:#232425"></div>
<svg style="left:1524px;top:112px" width="10" height="7" viewBox="0 0 10 7"><path d="M5 0.5L9.5 6.5H0.5Z" fill="#555"/></svg>
<div class="a" style="left:1525px;top:124px;width:9.2px;height:222px;background:#4a4b4c;border-radius:4.5px"></div>
<div class="a" style="left:1051px;top:127px;width:449.5px;height:67.6px;background:#474a4b;border:1.5px solid #333537;border-radius:8px"></div>
<div class="a" style="left:1063.4px;top:258px;width:1.5px;height:555px;background:#313336"></div>
<div class="a" style="left:1081.7px;top:351px;width:418.3px;height:78.4px;background:#252627;border-radius:5px;border:1px solid #2f3133"></div>
<div class="a" style="left:1081.7px;top:598px;width:418.3px;height:78px;background:#252627;border-radius:5px;border:1px solid #2f3133"></div>
<div class="a" style="left:1081.7px;top:730px;width:418.3px;height:100px;background:#252627;border-radius:5px;border:1px solid #2f3133"></div>
<div class="a" style="left:1082px;top:799px;width:418px;height:1px;background:#333538"></div>
<div class="a" style="left:1059px;top:253.9px;width:5.2px;height:5.2px;border-radius:3px;background:#9a9a9a"></div><div class="a" style="left:1059px;top:330.8px;width:5.2px;height:5.2px;border-radius:3px;background:#5cc886"></div><div class="a" style="left:1059px;top:463.1px;width:5.2px;height:5.2px;border-radius:3px;background:#5cc886"></div><div class="a" style="left:1059px;top:520.9px;width:5.2px;height:5.2px;border-radius:3px;background:#9a9a9a"></div><div class="a" style="left:1059px;top:577.0px;width:5.2px;height:5.2px;border-radius:3px;background:#5cc886"></div><div class="a" style="left:1059px;top:710.4px;width:5.2px;height:5.2px;border-radius:3px;background:#5cc886"></div>
<div class="tx" style="left:44.9px;top:9.0px;line-height:19px;font-size:13.4px;font-family:'Liberation Sans', sans-serif;font-weight:400;color:#9d9d9d;letter-spacing:-0.826px;">File</div>
<div class="tx" style="left:81.3px;top:9.0px;line-height:19px;font-size:13.4px;font-family:'Liberation Sans', sans-serif;font-weight:400;color:#9d9d9d;letter-spacing:-0.459px;">Edit</div>
<div class="tx" style="left:119.8px;top:9.0px;line-height:19px;font-size:13.4px;font-family:'Liberation Sans', sans-serif;font-weight:400;color:#9d9d9d;letter-spacing:-0.237px;">Selection</div>
<div class="tx" style="left:189.6px;top:9.0px;line-height:19px;font-size:13.4px;font-family:'Liberation Sans', sans-serif;font-weight:400;color:#9d9d9d;letter-spacing:-0.132px;">View</div>
<div class="tx" style="left:234.4px;top:9.0px;line-height:19px;font-size:13.4px;font-family:'Liberation Sans', sans-serif;font-weight:400;color:#9d9d9d;letter-spacing:-0.875px;">Go</div>
<div class="tx" style="left:268.3px;top:9.0px;line-height:19px;font-size:13.4px;font-family:'Liberation Sans', sans-serif;font-weight:400;color:#9d9d9d;letter-spacing:-1.139px;">Run</div>
<div class="tx" style="left:308.4px;top:9.0px;line-height:19px;font-size:13.4px;font-family:'Liberation Sans', sans-serif;font-weight:400;color:#9d9d9d;letter-spacing:-0.316px;">Terminal</div>
<div class="tx" style="left:374.5px;top:9.0px;line-height:19px;font-size:13.4px;font-family:'Liberation Sans', sans-serif;font-weight:400;color:#9d9d9d;letter-spacing:-0.349px;">Help</div>
<div class="tx" style="left:740.4px;top:8.5px;line-height:19px;font-size:13.4px;font-family:'Liberation Sans', sans-serif;font-weight:400;color:#9d9d9d;letter-spacing:-0.551px;">e-commerce-site</div>
<div class="tx" style="left:82.9px;top:45.0px;line-height:19px;font-size:13.4px;font-family:'Liberation Sans', sans-serif;font-weight:400;color:#e2c08d;letter-spacing:-0.196px;">Order.java (Working Tree)</div>
<div class="tx" style="left:237.7px;top:45.0px;line-height:19px;font-size:13.4px;font-family:'Liberation Sans', sans-serif;font-weight:400;color:#e2c08d;letter-spacing:0.000px;">M</div>
<div class="tx" style="left:66.0px;top:74.1px;line-height:19px;font-size:13.4px;font-family:'Liberation Sans', sans-serif;font-weight:400;color:#a9a9a9;letter-spacing:-0.980px;">src</div>
<div class="tx" style="left:99.2px;top:74.1px;line-height:19px;font-size:13.4px;font-family:'Liberation Sans', sans-serif;font-weight:400;color:#a9a9a9;letter-spacing:-0.077px;">main</div>
<div class="tx" style="left:144.9px;top:74.1px;line-height:19px;font-size:13.4px;font-family:'Liberation Sans', sans-serif;font-weight:400;color:#a9a9a9;letter-spacing:-0.859px;">java</div>
<div class="tx" style="left:184.5px;top:74.1px;line-height:19px;font-size:13.4px;font-family:'Liberation Sans', sans-serif;font-weight:400;color:#a9a9a9;letter-spacing:0.238px;">orderfulfillment</div>
<div class="tx" style="left:314.8px;top:74.1px;line-height:19px;font-size:13.4px;font-family:'Liberation Sans', sans-serif;font-weight:400;color:#a9a9a9;letter-spacing:-0.209px;">Order.java</div>
<div class="tx" style="left:392.0px;top:74.1px;line-height:19px;font-size:13.4px;font-family:'Liberation Sans', sans-serif;font-weight:400;color:#a9a9a9;letter-spacing:-1.086px;">...</div>
<div class="tx" style="left:1063.0px;top:45.0px;line-height:19px;font-size:13.4px;font-family:'Liberation Sans', sans-serif;font-weight:400;color:#e8e8e8;letter-spacing:0.004px;">I added and deleted attr...</div>
<div class="tx" style="left:1048.6px;top:77.8px;line-height:19px;font-size:13.4px;font-family:'Liberation Sans', sans-serif;font-weight:400;color:#d8d8d8;letter-spacing:0.135px;">I added and deleted attributes in the class ...</div>
<div class="tx" style="left:1057.7px;top:131.8px;line-height:19px;font-size:13.6px;font-family:'Liberation Sans', sans-serif;font-weight:400;color:#d4d4d4;letter-spacing:-0.063px;">I added and deleted attributes in the class diagram I'm currently working</div>
<div class="tx" style="left:1057.7px;top:152.2px;line-height:19px;font-size:13.6px;font-family:'Liberation Sans', sans-serif;font-weight:400;color:#d4d4d4;letter-spacing:-0.186px;">on, so please reflect the changes in the</div>
<div class="tx" style="left:1065.0px;top:172.5px;line-height:19px;font-size:13.6px;font-family:'Liberation Sans', sans-serif;font-weight:400;color:#d4d4d4;letter-spacing:-0.441px;">code.</div>
<div class="tx" style="left:1054.6px;top:209.1px;line-height:15px;font-size:10.5px;font-family:'Liberation Sans', sans-serif;font-weight:400;color:#8a8a8a;letter-spacing:0.165px;">c:\Users\user\astah-mcp\e-commerce-site\src\main\java\orderfulfillment\Order.java</div>
<div class="tx" style="left:1081.7px;top:247.0px;line-height:19px;font-size:13.6px;font-family:'Liberation Sans', sans-serif;font-weight:400;color:#d4d4d4;letter-spacing:-0.168px;">I'll help you synchronize the code with your class diagram changes. Let</div>
<div class="tx" style="left:1081.7px;top:266.9px;line-height:19px;font-size:13.6px;font-family:'Liberation Sans', sans-serif;font-weight:400;color:#d4d4d4;letter-spacing:-0.041px;">me first check the current diagram and then compare it with the</div>
<div class="tx" style="left:1081.7px;top:287.0px;line-height:19px;font-size:13.6px;font-family:'Liberation Sans', sans-serif;font-weight:400;color:#d4d4d4;letter-spacing:-0.202px;">existing code.</div>
<div class="tx" style="left:1081.5px;top:323.9px;line-height:19px;font-size:13.4px;font-family:'Liberation Sans', sans-serif;font-weight:700;color:#e0e0e0;letter-spacing:-0.292px;-webkit-text-stroke:0;">mcp__astah-mcp__getCurrentDiagram</div>
<div class="tx" style="left:1090.0px;top:361.0px;line-height:13px;font-size:9px;font-family:'Liberation Sans', sans-serif;font-weight:400;color:#7a7a7a;letter-spacing:0.000px;">OUT</div>
<div class="tx" style="left:1121.3px;top:361.2px;line-height:19px;font-size:13.4px;font-family:'Liberation Sans', sans-serif;font-weight:400;color:#e6e6e6;letter-spacing:-0.359px;">{"id":"1d-</div>
<div class="tx" style="left:1121.3px;top:381.0px;line-height:19px;font-size:13.4px;font-family:'Liberation Sans', sans-serif;font-weight:400;color:#e6e6e6;letter-spacing:-0.075px;">9cfd8ae715079ffadea9b7e6aff3fa52","qualifiedName":"OrderF</div>
<div class="tx" style="left:1121.3px;top:400.8px;line-height:19px;font-size:13.4px;font-family:'Liberation Sans', sans-serif;font-weight:400;color:#6a6a6a;letter-spacing:0.085px;clip-path:inset(0 0 4px 0)">ulfillment::OrderFulfillmentDiagram","description":"","erdiagra</div>
<div class="tx" style="left:1081.7px;top:456.5px;line-height:19px;font-size:13.4px;font-family:'Liberation Sans', sans-serif;font-weight:700;color:#e0e0e0;letter-spacing:-0.817px;-webkit-text-stroke:0;">Read</div>
<div class="tx" style="left:1120.9px;top:459.0px;line-height:15px;font-size:11px;font-family:'Liberation Mono', monospace;font-weight:400;color:#cfcfcf;letter-spacing:-0.374px;">c:\Users\user\astah-mcp\e-commerce-site\src\main\java\orderf</div>
<div class="tx" style="left:1081.7px;top:479.3px;line-height:15px;font-size:11px;font-family:'Liberation Mono', monospace;font-weight:400;color:#cfcfcf;letter-spacing:-0.366px;">ulfillment\Order.java</div>
<div class="tx" style="left:1081.7px;top:514.0px;line-height:19px;font-size:13.6px;font-family:'Liberation Sans', sans-serif;font-weight:400;color:#d4d4d4;letter-spacing:-0.037px;">Now let me get the class information from the diagram to see what</div>
<div class="tx" style="left:1081.7px;top:533.8px;line-height:19px;font-size:13.6px;font-family:'Liberation Sans', sans-serif;font-weight:400;color:#d4d4d4;letter-spacing:-0.044px;">attributes are currently defined:</div>
<div class="tx" style="left:1081.5px;top:570.1px;line-height:19px;font-size:13.4px;font-family:'Liberation Sans', sans-serif;font-weight:700;color:#e0e0e0;letter-spacing:-0.341px;-webkit-text-stroke:0;">mcp__astah-mcp__getClassIdsInCurrentDiagram</div>
<div class="tx" style="left:1090.0px;top:608.2px;line-height:13px;font-size:9px;font-family:'Liberation Sans', sans-serif;font-weight:400;color:#7a7a7a;letter-spacing:0.000px;">OUT</div>
<div class="tx" style="left:1121.3px;top:607.0px;line-height:19px;font-size:13.4px;font-family:'Liberation Sans', sans-serif;font-weight:400;color:#e6e6e6;letter-spacing:-0.027px;">["1g-9cfd8ae715079ffadea9b7e6aff3fa52","60-</div>
<div class="tx" style="left:1121.3px;top:626.8px;line-height:19px;font-size:13.4px;font-family:'Liberation Sans', sans-serif;font-weight:400;color:#e6e6e6;letter-spacing:-0.035px;">9cfd8ae715079ffadea9b7e6aff3fa52","hp-</div>
<div class="tx" style="left:1121.3px;top:646.5px;line-height:19px;font-size:13.4px;font-family:'Liberation Sans', sans-serif;font-weight:400;color:#6a6a6a;letter-spacing:-0.076px;clip-path:inset(0 0 4px 0)">9cfd8ae715079ffadea9b7e6aff3fa52","ei-</div>
<div class="tx" style="left:1081.5px;top:703.5px;line-height:19px;font-size:13.4px;font-family:'Liberation Sans', sans-serif;font-weight:700;color:#e0e0e0;letter-spacing:-0.166px;-webkit-text-stroke:0;">mcp__astah-mcp__getModelByIdOrQualifiedName</div>
<div class="tx" style="left:1090.5px;top:740.0px;line-height:14px;font-size:10px;font-family:'Liberation Mono', monospace;font-weight:400;color:#6f6f6f;letter-spacing:-0.016px;">IN</div>
<div class="tx" style="left:1121.3px;top:739.5px;line-height:15px;font-size:11px;font-family:'Liberation Mono', monospace;font-weight:400;color:#cfcfcf;letter-spacing:0.000px;">{</div>
<div class="tx" style="left:1134.0px;top:756.2px;line-height:15px;font-size:11px;font-family:'Liberation Mono', monospace;font-weight:400;color:#cfcfcf;letter-spacing:-0.378px;">"id": "1g-9cfd8ae715079ffadea9b7e6aff3fa52"</div>
<div class="tx" style="left:1121.3px;top:773.5px;line-height:15px;font-size:11px;font-family:'Liberation Mono', monospace;font-weight:400;color:#cfcfcf;letter-spacing:0.000px;">}</div>
<div class="a" style="left:1030px;top:814px;width:492px;height:93px;background:#3b3e41"></div>
<div class="a" style="left:1047.4px;top:812.4px;width:473px;height:78.2px;background:#484a4c;border:1.5px solid #353739;border-radius:8px"></div>
<div class="a" style="left:1048px;top:852px;width:472px;height:1px;background:#3c3e40"></div>
<div class="a" style="left:1030px;top:907px;width:506px;height:4px;background:#1e1f20"></div>

<svg style="left:0;top:0" width="1536" height="911">
<path d="M1059.2 875.2L1065.6 869" stroke="#b0b0b0" stroke-width="2.1" stroke-linecap="round"/>
<path d="M1170 868.5L1167.5 872.3L1170 876M1176 868.5L1178.5 872.3L1176 876M1174.2 867.5L1171.8 877" fill="none" stroke="#a8a8a8" stroke-width="1"/>
<circle cx="1254.3" cy="872.3" r="6.2" fill="#5a5c5e"/>
<path d="M1254.3 866.1A6.2 6.2 0 0 1 1254.3 878.5Q1251.5 872.3 1254.3 866.1Z" fill="#b8b8b8"/>
<circle cx="1436.5" cy="872" r="6" fill="none" stroke="#b0b0b0" stroke-width="1.3"/>
<path d="M1436.5 868.3V872.3L1439 874" fill="none" stroke="#b0b0b0" stroke-width="1.2"/>
<path d="M1470.5 866.5L1467.5 877.5" stroke="#a8a8a8" stroke-width="1.1"/>
<rect x="1489" y="859.3" width="26.7" height="26" rx="5" fill="#874c3d"/>
<path d="M1502.3 879V866M1497.3 871L1502.3 866L1507.3 871" fill="none" stroke="#d9b3a6" stroke-width="1.4"/>
</svg><div class="tx" style="left:1061.4px;top:823.5px;line-height:19px;font-size:13.6px;font-family:'Liberation Sans', sans-serif;font-weight:400;color:#a0a0a0;letter-spacing:-0.145px;">ctrl esc to focus or unfocus Claude</div>
<div class="tx" style="left:1071.8px;top:863.8px;line-height:18px;font-size:12.6px;font-family:'Liberation Sans', sans-serif;font-weight:400;color:#a8a8a8;letter-spacing:-0.634px;">Ask before edits</div>
<div class="tx" style="left:1182.5px;top:863.8px;line-height:18px;font-size:12.6px;font-family:'Liberation Sans', sans-serif;font-weight:400;color:#a8a8a8;letter-spacing:-0.779px;">Order.java</div>
<div class="tx" style="left:1265.0px;top:863.8px;line-height:18px;font-size:12.6px;font-family:'Liberation Sans', sans-serif;font-weight:400;color:#a8a8a8;letter-spacing:-1.074px;">56% used</div>
</body></html>
